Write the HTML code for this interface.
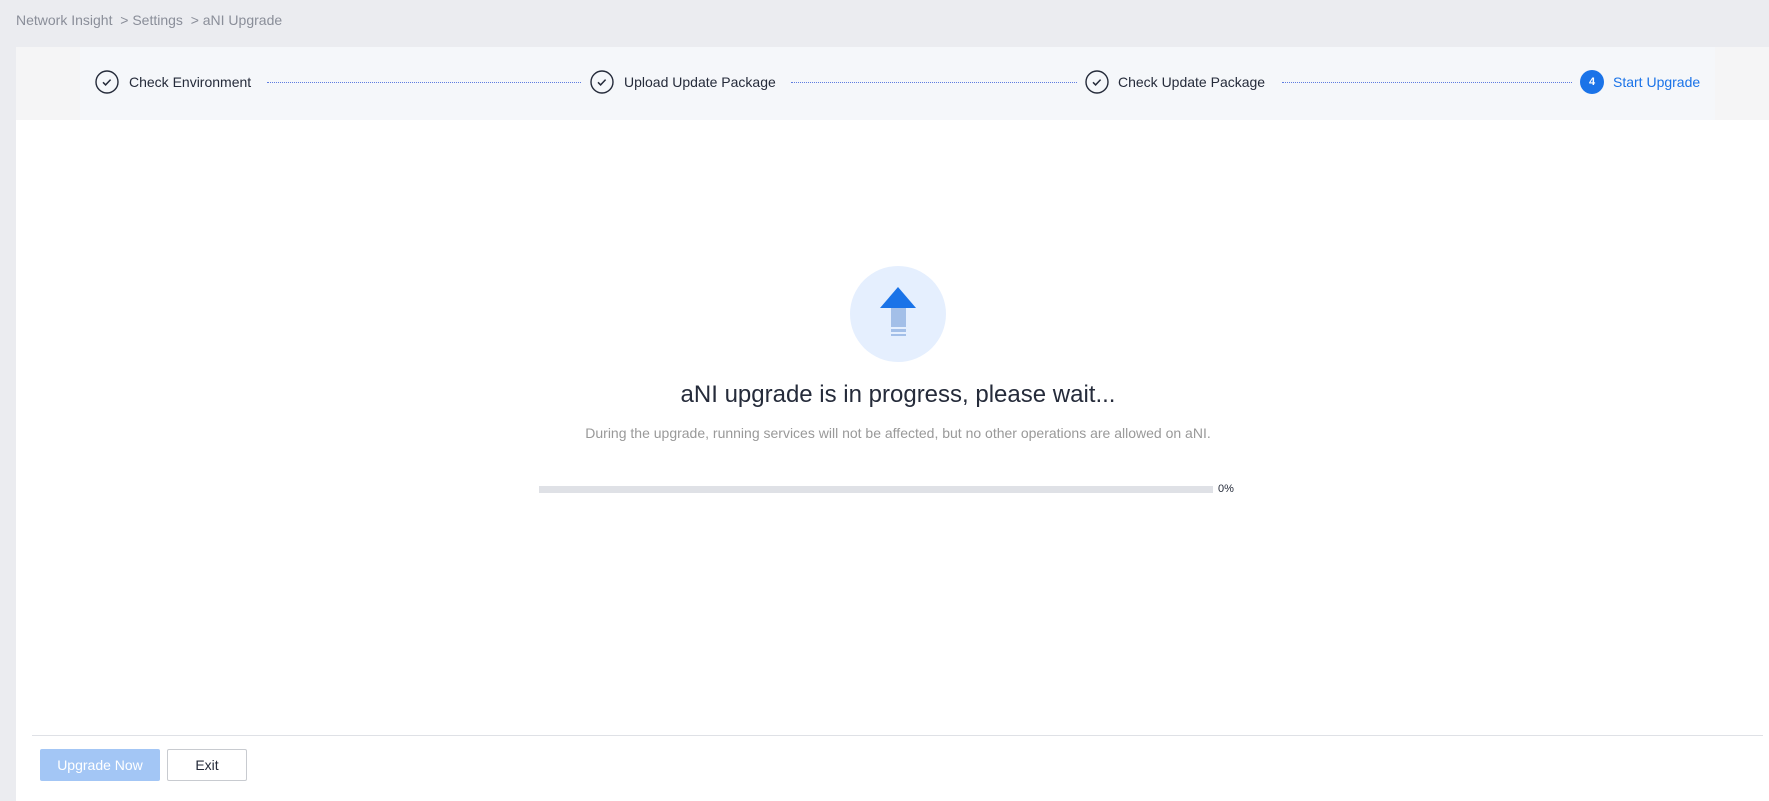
<!DOCTYPE html>
<html><head><meta charset="utf-8"><style>
*{margin:0;padding:0;box-sizing:border-box}
body{width:1769px;height:801px;background:#ebecf0;font-family:"Liberation Sans",Arial,sans-serif;position:relative;overflow:hidden}
.abs{position:absolute}
.crumb{left:16px;top:12px;font-size:14px;color:#8a8e99}
.main{left:16px;top:47px;width:1753px;height:754px;background:#fff}
.band{left:16px;top:47px;width:1753px;height:73px;background:#f5f5f6}
.band2{left:80px;top:47px;width:1635px;height:73px;background:#f5f7fa}
.lbl{top:74px;font-size:14px;color:#252b3a;line-height:16px}
.line{top:82px;height:0;border-top:1px dotted #5e7ce0}
</style></head><body>
<div class="abs crumb">Network Insight &nbsp;&gt; Settings &nbsp;&gt; aNI Upgrade</div>
<div class="abs main"></div>
<div class="abs band"></div>
<div class="abs band2"></div>

<svg class="abs" style="left:95px;top:70px" width="24" height="24"><circle cx="12" cy="12" r="11" fill="none" stroke="#252b3a" stroke-width="1.4"/><path d="M8 12.3l2.6 2.6 5-5.3" fill="none" stroke="#252b3a" stroke-width="1.5"/></svg>
<div class="abs lbl" style="left:129px">Check Environment</div>
<div class="abs line" style="left:267px;width:314px"></div>

<svg class="abs" style="left:590px;top:70px" width="24" height="24"><circle cx="12" cy="12" r="11" fill="none" stroke="#252b3a" stroke-width="1.4"/><path d="M8 12.3l2.6 2.6 5-5.3" fill="none" stroke="#252b3a" stroke-width="1.5"/></svg>
<div class="abs lbl" style="left:624px">Upload Update Package</div>
<div class="abs line" style="left:791px;width:286px"></div>

<svg class="abs" style="left:1085px;top:70px" width="24" height="24"><circle cx="12" cy="12" r="11" fill="none" stroke="#252b3a" stroke-width="1.4"/><path d="M8 12.3l2.6 2.6 5-5.3" fill="none" stroke="#252b3a" stroke-width="1.5"/></svg>
<div class="abs lbl" style="left:1118px">Check Update Package</div>
<div class="abs line" style="left:1282px;width:290px"></div>

<div class="abs" style="left:1580px;top:70px;width:24px;height:24px;border-radius:50%;background:#1a73e8;color:#fff;font-size:11px;font-weight:bold;text-align:center;line-height:24px">4</div>
<div class="abs lbl" style="left:1613px;color:#1a73e8">Start Upgrade</div>

<svg class="abs" style="left:850px;top:266px" width="96" height="96">
<circle cx="48" cy="48" r="48" fill="#e5effe"/>
<polygon points="48,21 30,42 66,42" fill="#1a73e8"/>
<rect x="41" y="42" width="15" height="19" fill="#a3bfe8"/>
<rect x="41" y="63" width="15" height="3" fill="#a3bfe8"/>
<rect x="41" y="68" width="15" height="2" fill="#a3bfe8"/>
</svg>
<div class="abs" style="left:0;width:1796px;top:381px;text-align:center;font-size:24px;color:#252b3a">aNI upgrade is in progress, please wait...</div>
<div class="abs" style="left:0;width:1796px;top:425px;text-align:center;font-size:14px;color:#999">During the upgrade, running services will not be affected, but no other operations are allowed on aNI.</div>
<div class="abs" style="left:539px;top:486px;width:674px;height:7px;background:#dfe1e6"></div>
<div class="abs" style="left:1218px;top:483px;font-size:11px;color:#252b3a">0%</div>

<div class="abs" style="left:32px;top:735px;width:1731px;height:1px;background:#dfe1e6"></div>
<div class="abs" style="left:40px;top:749px;width:120px;height:32px;background:#a3c6f5;border-radius:2px;color:#fff;font-size:14px;text-align:center;line-height:32px">Upgrade Now</div>
<div class="abs" style="left:167px;top:749px;width:80px;height:32px;border:1px solid #c8cbd0;border-radius:2px;color:#252b3a;font-size:14px;text-align:center;line-height:30px">Exit</div>
</body></html>
